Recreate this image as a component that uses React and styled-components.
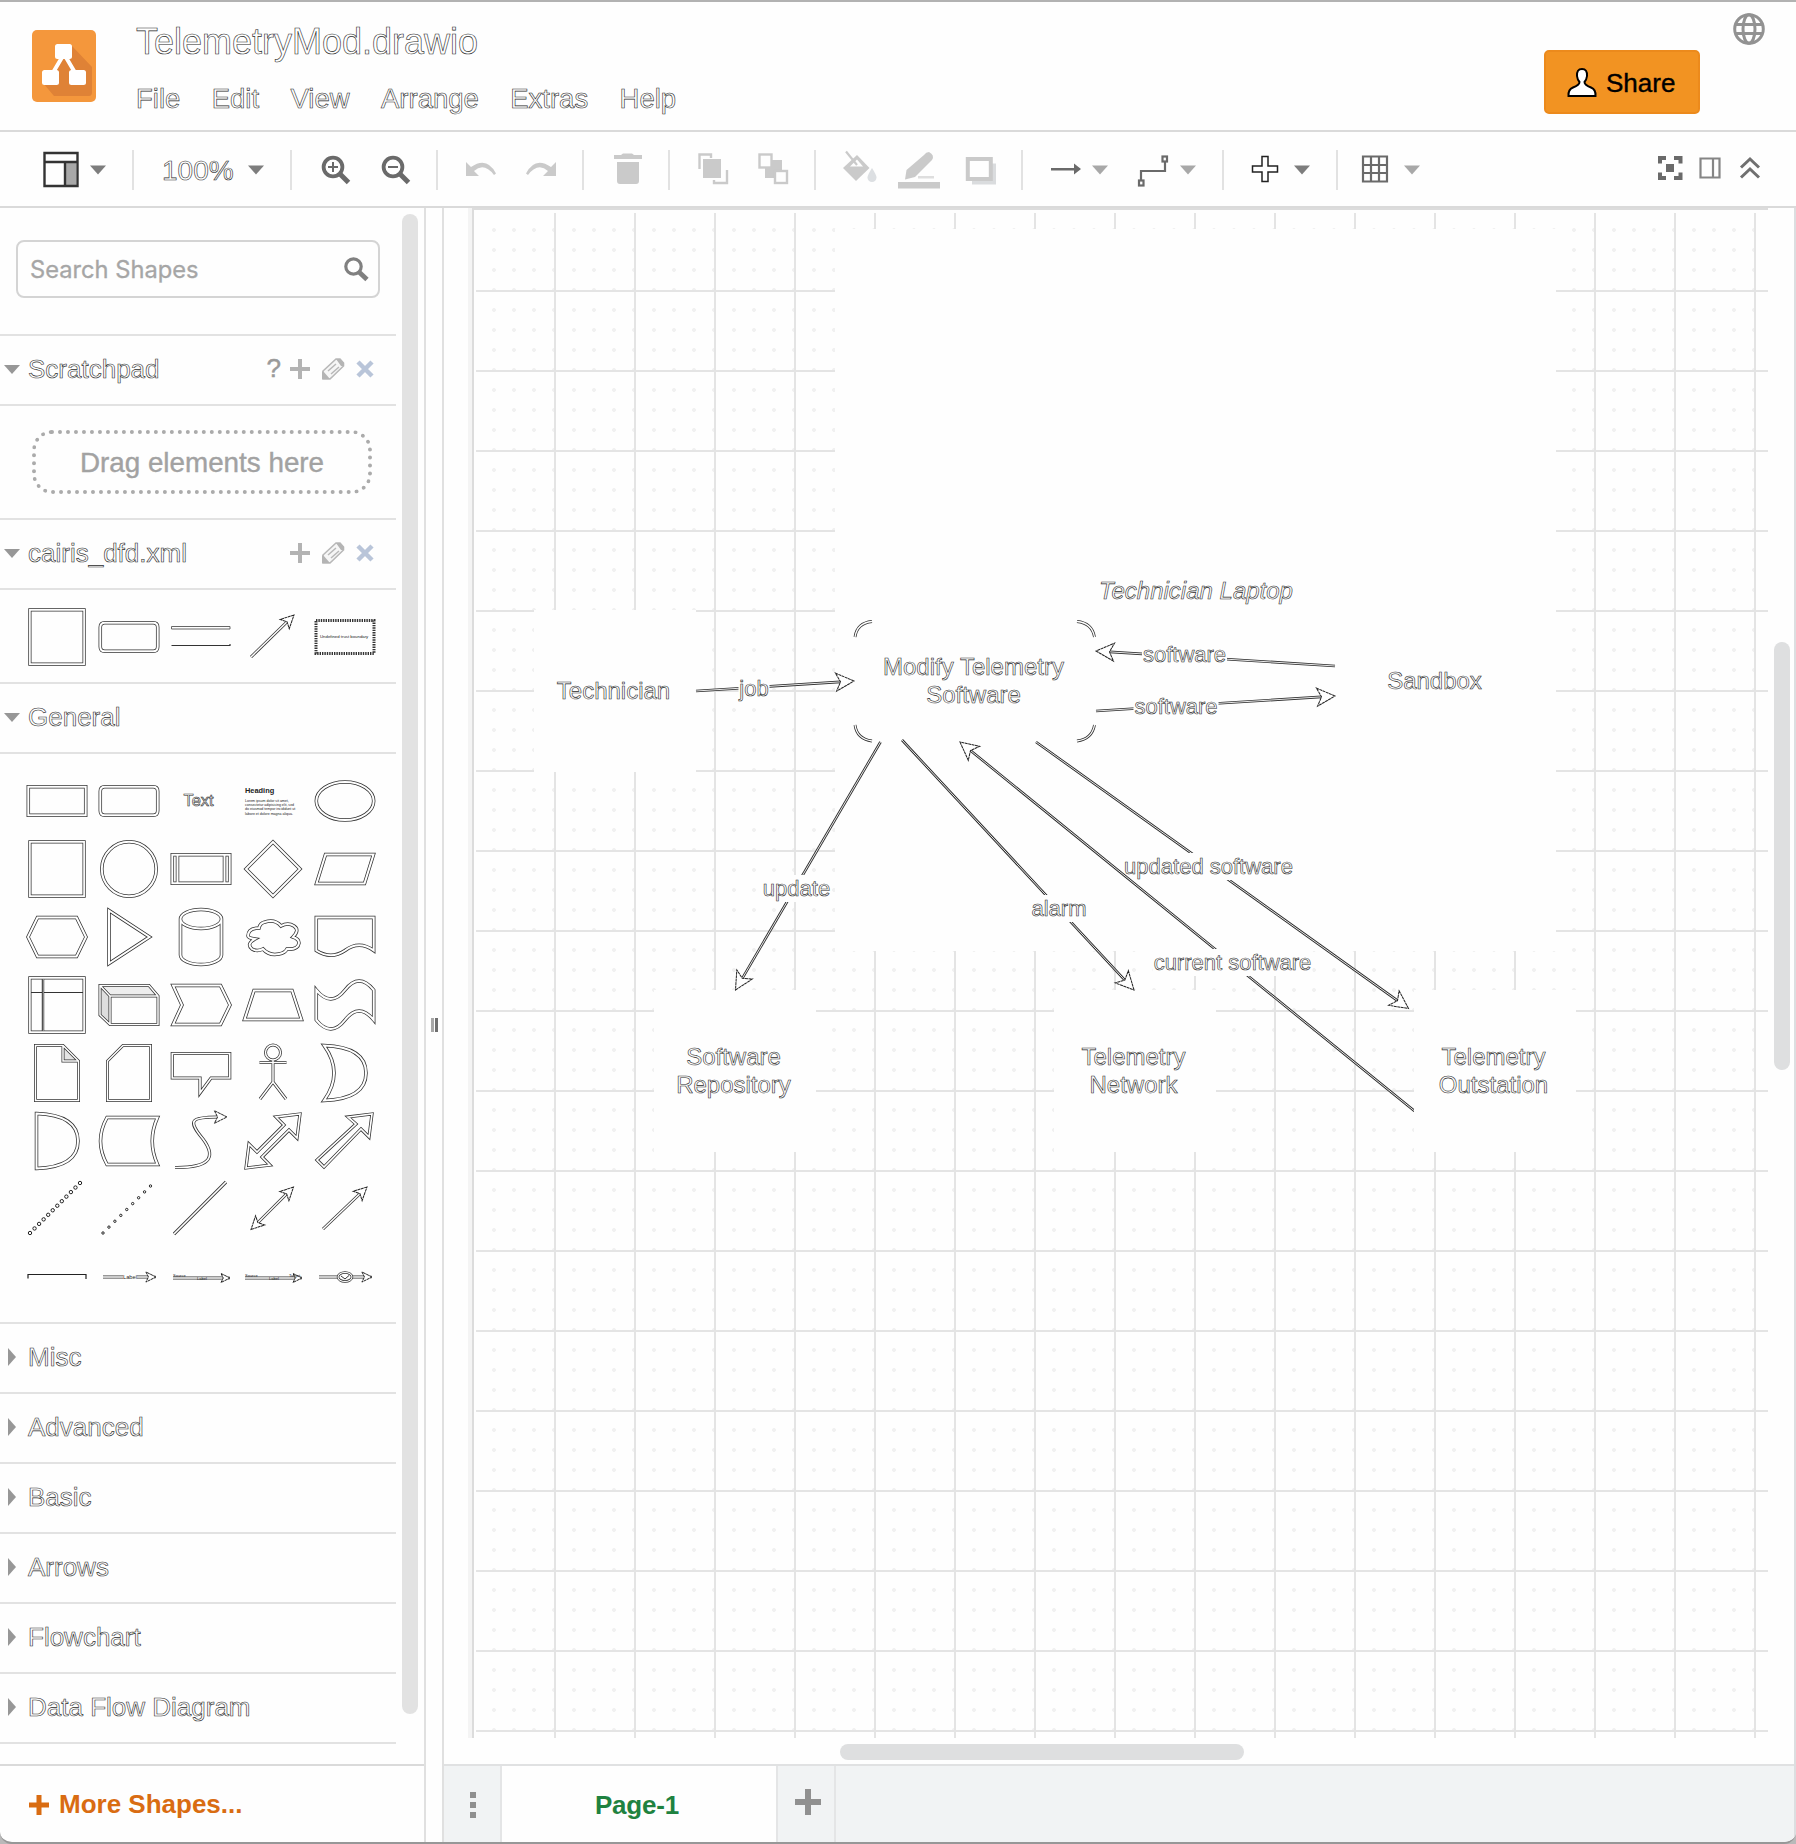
import React from "react";
import styled, { createGlobalStyle, css } from "styled-components";

const SANS = '"Liberation Sans", Arial, sans-serif';

const GlobalStyle = createGlobalStyle`
  * { box-sizing: border-box; }
  body { margin: 0; background: #b9b9b9; font-family: ${SANS}; }
  svg { display: block; flex: none; overflow: visible; }
`;

const hollow = css`
  color: #fff;
  -webkit-text-stroke: 0.6px #2a2a2a;
`;

/* ---------- window ---------- */
const Window = styled.div`
  width: 1796px;
  height: 1844px;
  display: flex;
  flex-direction: column;
  background: #fefefe;
  border-top: 2px solid #b2b2b2;
  border-bottom: 2px solid #979797;
  border-radius: 0 0 12px 12px;
  overflow: hidden;
`;
const Header = styled.header`
  height: 130px;
  flex: none;
  display: flex;
  align-items: flex-start;
  padding: 28px 31px 0 32px;
  border-bottom: 2px solid #dadada;
`;
const Titles = styled.div`
  margin: -9px auto 0 40px;
`;
const FileName = styled.div`
  ${hollow};
  font-size: 36px;
  line-height: 42px;
`;
const Menus = styled.nav`
  display: flex;
  gap: 31.4px;
  margin-top: 20px;
`;
const MenuItem = styled.span`
  ${hollow};
  font-size: 27.5px;
  line-height: 32px;
`;
const ShareButton = styled.button`
  display: flex;
  align-items: center;
  width: 156px;
  height: 64px;
  margin: 20px 33px 0 0;
  padding: 2px 0 0 21px;
  gap: 9px;
  border: 2px solid #ec8a1c;
  border-radius: 5px;
  background: #f29322;
  color: #000;
  font: 26px ${SANS};
  -webkit-text-stroke: 0.4px #000;
`;
const Globe = styled.div`
  margin-top: -17px;
`;

/* ---------- toolbar ---------- */
const Toolbar = styled.div`
  height: 76px;
  flex: none;
  display: flex;
  align-items: center;
  padding-top: 2px;
  border-bottom: 2px solid #dadada;
`;
const Tool = styled.div`
  width: ${(p) => p.$w}px;
  margin-left: ${(p) => p.$gap}px;
  flex: none;
`;
const Separator = styled.div`
  width: 2px;
  height: 40px;
  flex: none;
  margin-left: ${(p) => p.$gap}px;
  background: #e2e2e2;
`;
const ZoomValue = styled.div`
  ${hollow};
  width: 73px;
  margin: 2px 0 0 28px;
  font-size: 28px;
  line-height: 36px;
`;

/* ---------- sidebar ---------- */
const Main = styled.div`
  flex: 1;
  min-height: 0;
  display: flex;
`;
const Sidebar = styled.aside`
  width: 426px;
  flex: none;
  display: flex;
  flex-direction: column;
  border-right: 2px solid #e0e0e0;
`;
const SidebarBody = styled.div`
  height: 1556px;
  flex: none;
  display: flex;
`;
const Sections = styled.div`
  width: 396px;
`;
const SearchArea = styled.div`
  height: 128px;
  padding: 32px 16px 0;
  border-bottom: 2px solid #e2e2e2;
`;
const SearchBox = styled.div`
  width: 364px;
  height: 58px;
  display: flex;
  align-items: center;
  justify-content: space-between;
  padding: 0 10px 0 12px;
  border: 2px solid #d4d4d4;
  border-radius: 8px;
  color: #a6a6a6;
  font: 23.7px Inter, ${SANS};
  -webkit-text-stroke: 0.3px #a6a6a6;
`;
const SectionHeader = styled.div`
  height: 70px;
  display: flex;
  align-items: center;
  padding: 0 22px 3px 4px;
  border-bottom: 2px solid #e2e2e2;
`;
const SectionTitle = styled.span`
  ${hollow};
  margin: 0 auto 0 8px;
  font-size: 26px;
  line-height: 30px;
`;
const Help = styled.span`
  color: #9a9a9a;
  font-size: 26px;
  margin-right: 9px;
  -webkit-text-stroke: 0.5px #9a9a9a;
`;
const SectionIcons = styled.div`
  display: flex;
  align-items: center;
`;
const DropArea = styled.div`
  height: 114px;
  padding: 24px 24px 0 32px;
  border-bottom: 2px solid #e2e2e2;
`;
const DropTarget = styled.div`
  width: 340px;
  height: 64px;
  display: flex;
  align-items: center;
  justify-content: center;
  border: 4px dotted #ababab;
  border-radius: 20px;
  color: #a2a2a2;
  font-size: 27.8px;
  padding-top: 1px;
  -webkit-text-stroke: 0.4px #a2a2a2;
`;
const Palette = styled.div`
  height: ${(p) => p.$h}px;
  padding: ${(p) => p.$top}px 0 0 21px;
  display: grid;
  grid-template-columns: repeat(5, 72px);
  grid-auto-rows: 68px;
  border-bottom: 2px solid #e2e2e2;
`;
const SideThumb = styled.div`
  width: 16px;
  height: 1500px;
  margin: 6px 0 0 6px;
  border-radius: 8px;
  background: #e2e2e2;
`;
const MoreShapes = styled.div`
  flex: 1;
  display: flex;
  align-items: center;
  gap: 10px;
  padding: 1px 0 0 29px;
  border-top: 2px solid #dadada;
  color: #d96c12;
  font-weight: bold;
  font-size: 26px;
`;
const Splitter = styled.div`
  width: 16px;
  flex: none;
  display: flex;
  justify-content: center;
  padding: 810px 0 0 1px;
  gap: 1px;
`;
const Grip = styled.i`
  width: 3px;
  height: 14px;
  background: ${(p) => p.$c};
`;

/* ---------- editor ---------- */
const Editor = styled.section`
  flex: 1;
  min-width: 0;
  display: flex;
  flex-direction: column;
  border-left: 2px solid #e0e0e0;
  border-right: 2px solid #dcdee0;
`;
const Viewport = styled.div`
  height: 1556px;
  flex: none;
  display: grid;
  grid-template-columns: 28px 1296px 1fr;
  grid-template-rows: 1534px 1fr;
`;
const PageShadow = styled.div`
  height: 1530px;
  background: #f4f4f4;
  width: 4px;
  justify-self: end;
`;
const Page = styled.div`
  position: relative;
  height: 1530px;
  border-left: 2px solid #dcdcdc;
  border-top: 2px solid #dcdcdc;
`;
const Grid = styled.div`
  margin: 3px 0 0 2px;
  height: 1525px;
  width: 1292px;
  background-image:
    linear-gradient(90deg, #e4e4e4 2px, transparent 2px),
    linear-gradient(#e4e4e4 2px, transparent 2px),
    radial-gradient(circle at 10px 10px, #f1f1f1 1.7px, transparent 2.2px);
  background-size: 80px 80px, 80px 80px, 20px 20px;
  background-position: 78px 0, 0 77px, 8px 7px;
`;
const Diagram = styled.svg`
  position: absolute;
  left: -474px;
  top: -210px;
`;
const VThumb = styled.div`
  width: 16px;
  height: 428px;
  margin: 434px 0 0 6px;
  border-radius: 8px;
  background: #dedfe0;
`;
const HThumb = styled.div`
  grid-column: 1 / -1;
  width: 404px;
  height: 16px;
  margin: 2px 0 0 396px;
  border-radius: 8px;
  background: #dedfe0;
`;
const Tabs = styled.footer`
  flex: 1;
  display: flex;
  border-top: 2px solid #e0e1e2;
  background: #f1f3f4;
`;
const TabButton = styled.div`
  width: 58px;
  display: flex;
  align-items: center;
  justify-content: center;
  padding: ${(p) => p.$pad || "2px 0 0 2px"};
  border-right: 2px solid #e4e5e6;
`;
const Tab = styled.div`
  width: 276px;
  display: flex;
  align-items: center;
  justify-content: center;
  padding: 2px 4px 0 0;
  background: #fefefe;
  border-right: 2px solid #e4e5e6;
  color: #1f8240;
  font-weight: bold;
  font-size: 26px;
  letter-spacing: -0.2px;
`;
const NodeText = styled.text`
  font-family: ${SANS};
  font-size: ${(p) => p.$size || 24}px;
  font-style: ${(p) => (p.$italic ? "italic" : "normal")};
  fill: #fff;
  stroke: #2a2a2a;
  stroke-width: 0.6px;
  text-anchor: middle;
`;
const Tiny = styled.text`
  font-family: ${SANS};
  font-size: ${(p) => p.$size}px;
  font-weight: ${(p) => (p.$bold ? "bold" : "normal")};
  fill: #222;
`;

/* ---------- toolbar drawings ---------- */
const Caret = ({ c = "#7d7d7d" }) => (
  <svg width="16" height="40"><path d="M0 15.500H16L8 24.500Z" fill={c} /></svg>
);
const SideCaret = ({ open }) => (
  <svg width="16" height="20"><path d={open ? "M0 6H16L8 15Z" : "M4 1V19L12 10Z"} fill="#979797" /></svg>
);
const LIGHT = "#cacaca";
const DARK = "#6a6a6a";

const FormatIcon = () => (
  <svg width="36" height="40" fill="none" stroke="#333" strokeWidth="2.400">
    <rect x="22" y="12" width="11" height="23" fill="#a8a8a8" stroke="none" />
    <path d="M1.500 3H34.500V36H1.500ZM1.500 12H34.500M22 12V36" />
  </svg>
);
const Magnifier = ({ minus }) => (
  <svg width="28" height="40" fill="none" stroke={DARK}>
    <circle cx="11" cy="17" r="9.400" strokeWidth="3.800" />
    <path d="M17 23L26.500 32.500" strokeWidth="5" />
    <path d={minus ? "M6 17H16" : "M6 17H16M11 12V22"} strokeWidth="2" />
  </svg>
);
const Undo = ({ flip }) => (
  <svg width="32" height="40">
    <g transform={flip ? "translate(32 0) scale(-1 1)" : undefined} fill={LIGHT}>
      <path d="M1 12V26H14L9 21Q19 12 29 25L31 23.500Q22 6 6 17Z" />
    </g>
  </svg>
);
const Trash = () => (
  <svg width="30" height="40" fill={LIGHT}>
    <path d="M1 5H8L10 3.500H19L21 5H29V9H1ZM4 12H26V31Q26 34 23 34H7Q4 34 4 31Z" />
  </svg>
);
const Front = () => (
  <svg width="30" height="40" fill="none" stroke={LIGHT} strokeWidth="2.400">
    <rect x="5" y="9" width="18" height="19" fill={LIGHT} stroke="none" />
    <path d="M1.500 19V4.500H13V8M29 20V33H16V30" />
  </svg>
);
const Back = () => (
  <svg width="30" height="40" fill="none" stroke={LIGHT} strokeWidth="2.400">
    <rect x="7" y="10" width="17" height="18" fill={LIGHT} stroke="none" />
    <rect x="1.500" y="4.500" width="12" height="13" fill="#fefefe" />
    <rect x="17" y="21" width="12" height="12" fill="#fefefe" />
  </svg>
);
const Bucket = () => (
  <svg width="34" height="40" fill={LIGHT}>
    <path d="M14 5L26.500 18L13 31L0 18Z" />
    <path d="M14 9.500L20 16.500H7Z" fill="#fefefe" />
    <path d="M3 1.500L14 15" stroke={LIGHT} strokeWidth="2.200" />
    <path d="M29 18Q24.500 25 24.500 27.500A4.500 4.500 0 0 0 33.500 27.500Q33.500 25 29 18Z" fill="#dcdfe2" />
  </svg>
);
const PencilLine = () => (
  <svg width="42" height="40" fill={LIGHT}>
    <path d="M26 5Q28 2 31 2Q37 5 34 10L17 27L7 29.500L8.500 20Z" />
    <path d="M20 26H36V28.500H20Z" fill="#dedede" />
    <path d="M0 32H42V38.500H0Z" />
  </svg>
);
const Shadow = () => (
  <svg width="30" height="40">
    <rect x="6" y="13.500" width="24" height="21" fill="#dadcde" />
    <rect x="1.800" y="9" width="23" height="20" fill="#fefefe" stroke={LIGHT} strokeWidth="4" />
  </svg>
);
const ArrowRight = () => (
  <svg width="30" height="40"><path d="M0 18H23V13.500L30 19L23 24.500V20.500H0Z" fill={DARK} /></svg>
);
const Waypoint = () => (
  <svg width="30" height="40" fill="none" stroke={DARK} strokeWidth="2.200">
    <path d="M3 30V21H27V12" /><rect x="1" y="30.500" width="4.500" height="5" /><rect x="24.500" y="6.500" width="4.500" height="5" />
  </svg>
);
const CrossPlus = () => (
  <svg width="26" height="40">
    <path d="M10 6.500H16V16H25.500V22H16V31.500H10V22H.5V16H10Z" fill="#fff" stroke="#222" strokeWidth="1.500" />
  </svg>
);
const Table = () => (
  <svg width="26" height="40" fill="none" stroke={DARK} strokeWidth="2.200">
    <path d="M1 6.500H25V31.500H1ZM9 6.500V31.500M17 6.500V31.500M1 15H25M1 23H25" />
  </svg>
);
const Fullscreen = () => (
  <svg width="24" height="40" fill="none" stroke={DARK} strokeWidth="4">
    <path d="M2 13.500V8H8M16 8H22.500V13.500M22.500 22.500V28H16M8 28H2V22.500" />
    <rect x="8" y="14" width="8" height="8" fill={DARK} stroke="none" />
  </svg>
);
const PanelIcon = () => (
  <svg width="20" height="40" fill="none" stroke="#858585" strokeWidth="2.200">
    <path d="M.5 8.500H19.500V27.500H.5ZM13 8.500V27.500" />
  </svg>
);
const Chevrons = () => (
  <svg width="20" height="40" fill="none" stroke="#707070" strokeWidth="3">
    <path d="M1 17.500L10 9L19 17.500M1 27.500L10 19L19 27.500" />
  </svg>
);
const PlusIcon = ({ s, w, c }) => (
  <svg width={s} height={s}><path d={`M${s / 2} 0V${s}M0 ${s / 2}H${s}`} stroke={c} strokeWidth={w} /></svg>
);
const Logo = () => (
  <svg width="64" height="72">
    <rect width="64" height="72" rx="5" fill="#f4973c" />
    <path d="M40 16L60 37V62Q60 66 57 66H22L11 53L30 30Z" fill="#df8236" />
    <path d="M32 24L19 46M32 24L45 46" stroke="#fff" strokeWidth="4" />
    <rect x="23" y="14" width="17" height="15" rx="2.500" fill="#fff" />
    <rect x="10" y="40" width="17" height="15" rx="2.500" fill="#fff" />
    <rect x="37" y="40" width="17" height="15" rx="2.500" fill="#fff" />
  </svg>
);
const GlobeIcon = () => (
  <svg width="32" height="32" fill="none" stroke="#929292" strokeWidth="3">
    <circle cx="16" cy="16" r="14.300" />
    <ellipse cx="16" cy="16" rx="6" ry="14.300" />
    <path d="M3 11.500H29M3 20.500H29" />
  </svg>
);
const Person = () => (
  <svg width="30" height="32">
    <path d="M15 2Q9.500 2 10 9Q10.500 13 12.500 15Q12.500 18 6 20.500Q1 22.500 1.500 29H28.500Q29 22.500 24 20.500Q17.500 18 17.500 15Q19.500 13 20 9Q20.500 2 15 2Z" fill="#fff" stroke="#000" strokeWidth="2" />
  </svg>
);
const SearchIcon = () => (
  <svg width="24" height="24" fill="none" stroke="#808080">
    <circle cx="9.500" cy="9.500" r="7.700" strokeWidth="3.200" /><path d="M15 15L23 22.500" strokeWidth="4.800" />
  </svg>
);
const EditIcon = () => (
  <svg width="22" height="22">
    <path d="M1 21V13L14 1H18L21.500 5V8L8 21Z" fill="#f6f6f6" stroke="#b8b8b8" strokeWidth="1.600" />
    <path d="M1 13L8 21H0V14ZM14 1H18L22 5V8L19 8Z" fill="#b4b4b4" />
    <path d="M6 13L14 6M9 16L17 9" stroke="#b8b8b8" strokeWidth="1.500" />
  </svg>
);
const CloseIcon = () => (
  <svg width="18" height="18"><path d="M2 2L16 16M16 2L2 16" stroke="#b9c5d9" strokeWidth="4.500" /></svg>
);

/* ---------- shape palette ---------- */
const Cell = ({ children }) => <svg width="72" height="68" viewBox="-36 -34 72 68">{children}</svg>;

/* A white line with a thin dark edge on both sides. */
const Tube = ({ d, fill = "none", w = 3.5 }) => (
  <g strokeLinejoin="miter">
    <path d={d} fill={fill} stroke="#333" strokeWidth={w} />
    <path d={d} fill="none" stroke="#fff" strokeWidth={w - 1.5} />
  </g>
);

const Head = ({ x, y, a, s = 1 }) => (
  <path
    transform={`translate(${x} ${y}) rotate(${a}) scale(${s})`}
    d="M0 0L-18 -9L-13.500 0L-18 9Z"
    fill="#fff"
    stroke="#222"
    strokeWidth={1 / s}
    strokeDasharray={`${3 / s} ${0.5 / s}`}
  />
);

const Halo = ({ x, y, a, s }) => (
  <rect transform={`translate(${x} ${y}) rotate(${a}) scale(${s})`} x="-13" y="-3" width="16" height="6" fill="#fff" />
);

const ArrowLine = ({ x1, y1, x2, y2, both, s = 0.72, w = 3 }) => {
  const a = (Math.atan2(y2 - y1, x2 - x1) * 180) / Math.PI;
  return (
    <g>
      <Tube d={`M${x1} ${y1}L${x2} ${y2}`} w={w} />
      <Halo x={x2} y={y2} a={a} s={s} />
      <Head x={x2} y={y2} a={a} s={s} />
      {both && <Halo x={x1} y={y1} a={a + 180} s={s} />}
      {both && <Head x={x1} y={y1} a={a + 180} s={s} />}
    </g>
  );
};

const rect = (x, y) => `M${-x} ${-y}H${x}V${y}H${-x}Z`;
const roundRect = (x, y, r) =>
  `M${-x + r} ${-y}H${x - r}Q${x} ${-y} ${x} ${-y + r}V${y - r}Q${x} ${y} ${x - r} ${y}H${-x + r}Q${-x} ${y} ${-x} ${y - r}V${-y + r}Q${-x} ${-y} ${-x + r} ${-y}Z`;
const ellipse = (rx, ry) => `M${-rx} 0A${rx} ${ry} 0 1 1 ${rx} 0A${rx} ${ry} 0 1 1 ${-rx} 0Z`;

const dotRun = (x1, y1, x2, y2, n, r) =>
  Array.from({ length: n }, (_, i) => (
    <circle key={i} cx={x1 + ((x2 - x1) * i) / (n - 1)} cy={y1 + ((y2 - y1) * i) / (n - 1)} r={r} fill="#fff" stroke="#222" strokeWidth="1" />
  ));

const lorem = ["Lorem ipsum dolor sit amet,", "consectetur adipisicing elit, sed", "do eiusmod tempor incididunt ut", "labore et dolore magna aliqua."];

const generalShapes = [
  <Tube d={rect(28.7, 14.2)} />,
  <Tube d={roundRect(28.7, 14.2, 4.5)} />,
  <NodeText $size={16.5} x="-2.500" y="5">Text</NodeText>,
  <>
    <Tiny $size={7.4} $bold x="-28" y="-8">Heading</Tiny>
    {lorem.map((t, i) => <Tiny key={t} $size={3.55} x="-28" y={1 + i * 4.2}>{t}</Tiny>)}
  </>,
  <Tube d={ellipse(28.7, 19.1)} />,
  <Tube d={rect(27.1, 27.1)} w={3.2} />,
  <Tube d={ellipse(27.2, 27.2)} />,
  <Tube d={`${rect(28.7, 14.2)}M-23.500 -14.200V14.200M23.500 -14.200V14.200`} />,
  <Tube d="M0 -27L27 0L0 27L-27 0Z" />,
  <Tube d="M-19.500 -14.500H28.500L19.500 14.500H-28.500Z" />,
  <Tube d="M-19.500 -19.500H19.500L29 0L19.500 19.500H-19.500L-29 0Z" />,
  <Tube d="M-20 -26.500L20.500 0L-20 26.500Z" />,
  <Tube d="M-20.500 -18A20.500 9.500 0 0 1 20.500 -18V18A20.500 9.500 0 0 1 -20.500 18ZM-20.500 -18A20.500 9.500 0 0 0 20.500 -18" />,
  <Tube d="M-14 -9Q-25 -9 -25 -1Q-25 1 -18 2Q-27 7 -21 12Q-16 15 -10 12Q-4 19 6 17Q12 16 14 12Q25 13 26 6Q26 2 20 0Q27 -7 21 -11Q15 -15 8 -11Q2 -18 -8 -15Q-13 -14 -14 -9Z" />,
  <Tube d="M-28.700 -19.500H28.700V13.500Q14 3 0 13.500Q-14 23 -28.700 13.500Z" />,
  <>
    <Tube d={rect(27.1, 27.1)} w={3.2} />
    <path d="M-26 -12.500H26" stroke="#333" strokeWidth="1" />
    <path d="M-14 -26V26" stroke="#222" strokeWidth="2.400" />
    <path d="M-13.800 -26V26" stroke="#fff" strokeWidth="0.700" />
  </>,
  <>
    <path d="M-29 -19.500H20L29 -9H-19V19.500L-29 10Z" fill="#dedede" />
    <path d="M-29 -19.500H20L29 -9H-19Z" fill="#eee" />
    <Tube d="M-29 -19.500H20L29 -9V19.500H-19L-29 10ZM-29 -19.500L-19 -9V19.500M-19 -9H29" w={3} />
  </>,
  <Tube d="M-28 -19.500H19.500L29 0L19.500 19.500H-28L-19 0Z" />,
  <Tube d="M-19 -14.500H19L28.500 14.500H-28.500Z" />,
  <Tube d="M-28.700 -15Q-14 3 0 -15Q14 -33 28.700 -15V15Q14 -3 0 15Q-14 33 -28.700 15Z" />,
  <>
    <path d="M6 -27.500L21 -12H6Z" fill="#e4e4e4" />
    <Tube d="M-21.500 -27.500H6L21.500 -12V27.500H-21.500ZM6 -27.500V-12H21.500" w={3} />
  </>,
  <Tube d="M-6 -27.500H21.500V27.500H-21.500V-12Z" w={3} />,
  <Tube d="M-28.700 -19.500H28.700V5H10L-1 20V5H-28.700Z" w={3.2} />,
  <Tube d={`M-7.500 -20.500A7.500 7.500 0 1 1 7.500 -20.500A7.500 7.500 0 1 1 -7.500 -20.500M0 -12.500V10M-13.500 -10.500H13.500M0 9L-13 26M0 9L13 26`} w={3} />,
  <Tube d="M-21 -27.500Q21 -26 21 0Q21 26 -21 27.500Q-1 0 -21 -27.500Z" />,
  <Tube d="M-20.500 -27.500Q21 -26 21 0Q21 26 -20.500 27.500Z" />,
  <Tube d="M-22 -23.500H28.500Q18 0 28.500 23.500H-22Q-35 0 -22 -23.500Z" />,
  <>
    <Tube d="M-26 26.500C6 27 17 18 2 -2C-14 -21 -10 -24 17 -24" w={3.2} />
    <Halo x={26} y={-24} a={0} s={0.7} />
    <Head x={26} y={-24} a={0} s={0.7} />
  </>,
  <Tube d="M27 -27L24 -3L16 -11L-11 16L-3 24L-27 27L-24 3L-16 11L11 -16L3 -24Z" w={3.2} />,
  <Tube d="M27 -27L24 -4L16 -12L-21 26L-28 19L11 -17L3 -24Z" w={3.2} />,
  <>{dotRun(-27, 24, 23, -26, 12, 1.7)}</>,
  <>{dotRun(-26, 24, 21.5, -23, 9, 1.2)}</>,
  <Tube d="M-27 25L25 -27" w={3.2} />,
  <ArrowLine x1={-22} y1={20.5} x2={20.5} y2={-22} both />,
  <ArrowLine x1={-22} y1={20} x2={22} y2={-22} />,
  <path d="M-29 1.500V-2.500H29V2" fill="none" stroke="#222" strokeWidth="1.200" />,
  <>
    <ArrowLine x1={-26} y1={0} x2={27} y2={0} s={0.56} />
    <rect x="-6" y="-3" width="14" height="6" fill="#fefefe" />
    <Tiny $size={5.7} x="-6" y="2">Label</Tiny>
  </>,
  <>
    <ArrowLine x1={-28} y1={1} x2={29} y2={1} s={0.5} w={2.8} />
    <Tiny $size={4} x="-28" y="0">Source</Tiny>
    <Tiny $size={4} x="-4" y="2.500">Label</Tiny>
  </>,
  <>
    <ArrowLine x1={-28} y1={1} x2={29} y2={1} s={0.5} w={2.8} />
    <Tiny $size={4} x="-28" y="0">Source</Tiny>
    <Tiny $size={4} x="-4" y="2.500">Label</Tiny>
    <Tiny $size={4} x="16" y="0">Target</Tiny>
  </>,
  <>
    <ArrowLine x1={-26} y1={0} x2={27} y2={0} s={0.56} />
    <Tube d={ellipse(7, 4.5)} fill="#fff" w={2.6} />
    <path d="M-4 -1L0 2L4 -1.500" fill="none" stroke="#333" />
  </>,
];

const dfdShapes = [
  <Tube d={rect(27.1, 27.1)} w={3.2} />,
  <Tube d={roundRect(28.7, 14.2, 4.5)} />,
  <>
    <path d="M-29.500 -10.500H29V-8H-29.500Z" fill="#fff" stroke="#666" strokeWidth="1" />
    <path d="M-29.500 8.500H29V7" fill="none" stroke="#333" strokeWidth="1.200" />
  </>,
  <ArrowLine x1={-22} y1={20} x2={21} y2={-22} />,
  <>
    <path d={rect(29, 16.5)} fill="none" stroke="#333" strokeWidth="3" strokeDasharray="1.400 1" />
    <Tiny $size={4.3} x="-25" y="1">Undefined trust boundary</Tiny>
  </>,
];

/* ---------- diagram ---------- */
const Edge = ({ x1, y1, x2, y2 }) => {
  const a = Math.atan2(y2 - y1, x2 - x1);
  const ex = x2 - Math.cos(a) * 13.5;
  const ey = y2 - Math.sin(a) * 13.5;
  return (
    <g>
      <path d={`M${x1} ${y1}L${ex} ${ey}`} stroke="#2e2e2e" strokeWidth="2.600" />
      <path d={`M${x1} ${y1}L${ex} ${ey}`} stroke="#fff" strokeWidth="0.900" />
      <Head x={x2} y={y2} a={(a * 180) / Math.PI} />
    </g>
  );
};
const EdgeLabel = ({ x, y, w, children }) => (
  <g>
    <rect x={x - w / 2 - 1} y={y - 21} width={w + 2} height="27" fill="#fefefe" />
    <NodeText $size={22} x={x} y={y}>{children}</NodeText>
  </g>
);
const DiagramNode = ({ x, y, lines, tx, ty }) => (
  <g>
    <rect x={x} y={y} width="162" height="162" fill="#fefefe" />
    {lines.map((t, i) => <NodeText key={t} x={tx} y={ty + i * 28}>{t}</NodeText>)}
  </g>
);

const collapsed = ["Misc", "Advanced", "Basic", "Arrows", "Flowchart", "Data Flow Diagram"];

const Section = ({ title, open, help, editable }) => (
  <SectionHeader>
    <SideCaret open={open} />
    <SectionTitle>{title}</SectionTitle>
    {editable && (
      <SectionIcons>
        {help && <Help>?</Help>}
        <PlusIcon s={20} w={4} c="#b3b3b3" />
        <Tool $w={22} $gap={12}><EditIcon /></Tool>
        <Tool $w={18} $gap={12}><CloseIcon /></Tool>
      </SectionIcons>
    )}
  </SectionHeader>
);

export default function App() {
  return (
    <>
      <GlobalStyle />
      <Window>
        <Header>
          <Logo />
          <Titles>
            <FileName>TelemetryMod.drawio</FileName>
            <Menus>
              {["File", "Edit", "View", "Arrange", "Extras", "Help"].map((m) => <MenuItem key={m}>{m}</MenuItem>)}
            </Menus>
          </Titles>
          <ShareButton><Person />Share</ShareButton>
          <Globe><GlobeIcon /></Globe>
        </Header>

        <Toolbar>
          <Tool $w={36} $gap={43}><FormatIcon /></Tool>
          <Tool $w={16} $gap={11}><Caret /></Tool>
          <Separator $gap={26} />
          <ZoomValue>100%</ZoomValue>
          <Tool $w={16} $gap={13}><Caret /></Tool>
          <Separator $gap={26} />
          <Tool $w={28} $gap={30}><Magnifier /></Tool>
          <Tool $w={28} $gap={32}><Magnifier minus /></Tool>
          <Separator $gap={26} />
          <Tool $w={32} $gap={27}><Undo /></Tool>
          <Tool $w={32} $gap={28}><Undo flip /></Tool>
          <Separator $gap={25} />
          <Tool $w={30} $gap={29}><Trash /></Tool>
          <Separator $gap={25} />
          <Tool $w={30} $gap={28}><Front /></Tool>
          <Tool $w={30} $gap={30}><Back /></Tool>
          <Separator $gap={26} />
          <Tool $w={34} $gap={27}><Bucket /></Tool>
          <Tool $w={42} $gap={21}><PencilLine /></Tool>
          <Tool $w={30} $gap={26}><Shadow /></Tool>
          <Separator $gap={25} />
          <Tool $w={30} $gap={28}><ArrowRight /></Tool>
          <Tool $w={16} $gap={11}><Caret c="#a8a8a8" /></Tool>
          <Tool $w={30} $gap={30}><Waypoint /></Tool>
          <Tool $w={16} $gap={12}><Caret c="#a8a8a8" /></Tool>
          <Separator $gap={26} />
          <Tool $w={26} $gap={28}><CrossPlus /></Tool>
          <Tool $w={16} $gap={16}><Caret /></Tool>
          <Separator $gap={26} />
          <Tool $w={26} $gap={24}><Table /></Tool>
          <Tool $w={16} $gap={16}><Caret c="#a8a8a8" /></Tool>
          <Tool $w={24} $gap={238}><Fullscreen /></Tool>
          <Tool $w={20} $gap={18}><PanelIcon /></Tool>
          <Tool $w={20} $gap={20}><Chevrons /></Tool>
        </Toolbar>

        <Main>
          <Sidebar>
            <SidebarBody>
              <Sections>
                <SearchArea>
                  <SearchBox>Search Shapes<SearchIcon /></SearchBox>
                </SearchArea>
                <Section title="Scratchpad" open editable help />
                <DropArea><DropTarget>Drag elements here</DropTarget></DropArea>
                <Section title="cairis_dfd.xml" open editable />
                <Palette $h={94} $top={13}>
                  {dfdShapes.map((s, i) => <Cell key={i}>{s}</Cell>)}
                </Palette>
                <Section title="General" open />
                <Palette $h={570} $top={13}>
                  {generalShapes.map((s, i) => <Cell key={i}>{s}</Cell>)}
                </Palette>
                {collapsed.map((t) => <Section key={t} title={t} />)}
              </Sections>
              <SideThumb />
            </SidebarBody>
            <MoreShapes><PlusIcon s={20} w={5} c="#d96c12" />More Shapes...</MoreShapes>
          </Sidebar>

          <Splitter><Grip $c="#a8a8a8" /><Grip $c="#6f6f6f" /></Splitter>

          <Editor>
            <Viewport>
              <PageShadow />
              <Page>
                <Grid />
                <Diagram width="1796" height="1844">
                  <rect x="835" y="229" width="721" height="722" fill="#fefefe" />
                  <NodeText $italic x="1196" y="599">Technician Laptop</NodeText>
                  <DiagramNode x={534} y={610} lines={["Technician"]} tx={613.5} ty={699} />
                  <DiagramNode x={1335} y={600} lines={["Sandbox"]} tx={1434.5} ty={689} />
                  <DiagramNode x={654} y={990} lines={["Software", "Repository"]} tx={733.5} ty={1065} />
                  <DiagramNode x={1054} y={990} lines={["Telemetry", "Network"]} tx={1133.5} ty={1065} />
                  <Tube d="M855 637Q857 623 872 621.500M1077 621.500Q1092 623 1094.500 637M855 725Q857 739 872 741M1077 741Q1092 739 1094.500 725" w={2.8} />
                  <NodeText x="973.500" y="675">Modify Telemetry</NodeText>
                  <NodeText x="973.500" y="703">Software</NodeText>
                  <Edge x1={696} y1={691} x2={854} y2={681} />
                  <EdgeLabel x={754} y={695.5} w={29}>job</EdgeLabel>
                  <Edge x1={1335} y1={666} x2={1096} y2={651} />
                  <EdgeLabel x={1184.5} y={662} w={83}>software</EdgeLabel>
                  <Edge x1={1096} y1={711} x2={1335} y2={696} />
                  <EdgeLabel x={1176} y={714} w={83}>software</EdgeLabel>
                  <Edge x1={880.5} y1={742} x2={735.5} y2={990} />
                  <EdgeLabel x={796.5} y={896} w={67}>update</EdgeLabel>
                  <Edge x1={902} y1={740} x2={1134} y2={990} />
                  <EdgeLabel x={1059} y={916} w={55}>alarm</EdgeLabel>
                  <Edge x1={1036} y1={742} x2={1408.5} y2={1008.5} />
                  <EdgeLabel x={1208.5} y={874} w={167}>updated software</EdgeLabel>
                  <Edge x1={1414.5} y1={1111} x2={960} y2={742} />
                  <EdgeLabel x={1232.5} y={970} w={158}>current software</EdgeLabel>
                  <DiagramNode x={1414} y={990} lines={["Telemetry", "Outstation"]} tx={1493.5} ty={1065} />
                </Diagram>
              </Page>
              <VThumb />
              <HThumb />
            </Viewport>
            <Tabs>
              <TabButton>
                <svg width="6" height="26"><path d="M0 0H6V6H0ZM0 10H6V16H0ZM0 20H6V26H0Z" fill="#8f8f8f" /></svg>
              </TabButton>
              <Tab>Page-1</Tab>
              <TabButton $pad="0 0 4px 3px"><PlusIcon s={26} w={6} c="#909090" /></TabButton>
            </Tabs>
          </Editor>
        </Main>
      </Window>
    </>
  );
}
